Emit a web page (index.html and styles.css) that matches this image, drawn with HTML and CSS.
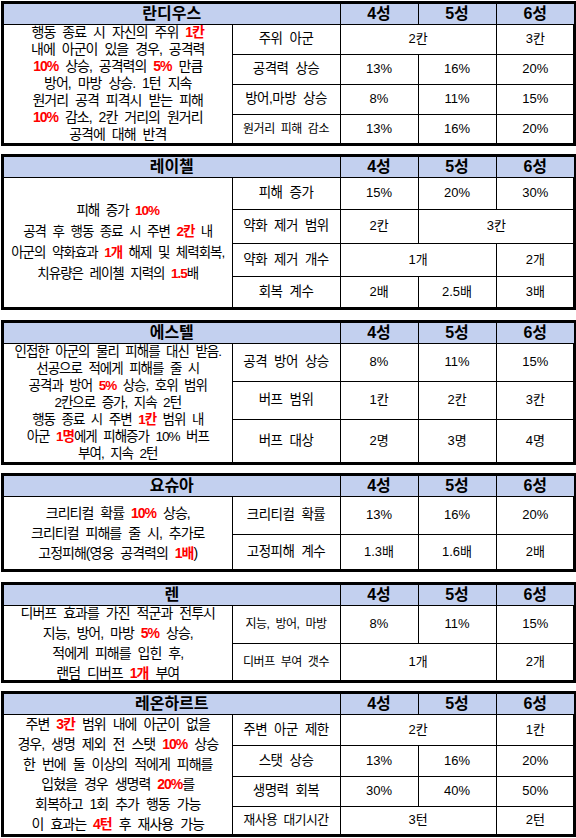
FILE: index.html
```html
<!DOCTYPE html>
<html lang="ko">
<head>
<meta charset="utf-8">
<title>영웅 스킬</title>
<link rel="stylesheet" href="styles.css">
</head>
<body>
<main class="page">

<section class="blk">
<table class="t">
<colgroup><col class="c1"><col class="c2"><col class="c3"><col class="c3"><col class="c3"></colgroup>
<tr class="h20"><th colspan="2">란디우스</th><th>4성</th><th>5성</th><th>6성</th></tr>
<tr class="h30"><td class="desc" rowspan="4"><div class="dt"><p class="lh17">행동 종료 시 자신의 주위 <b>1칸</b><br>내에 아군이 있을 경우, 공격력<br><b>10%</b> 상승, 공격력의 <b>5%</b> 만큼<br>방어, 마방 상승. 1턴 지속<br>원거리 공격 피격시 받는 피해<br><b>10%</b> 감소, 2칸 거리의 원거리<br>공격에 대해 반격</p></div></td><td class="lbl">주위 아군</td><td colspan="2">2칸</td><td>3칸</td></tr>
<tr class="h30"><td class="lbl">공격력 상승</td><td>13%</td><td>16%</td><td>20%</td></tr>
<tr class="h30"><td class="lbl">방어,마방 상승</td><td>8%</td><td>11%</td><td>15%</td></tr>
<tr class="h29"><td class="lbl sm">원거리 피해 감소</td><td>13%</td><td>16%</td><td>20%</td></tr>
</table>
</section>

<section class="blk g8">
<table class="t">
<colgroup><col class="c1"><col class="c2"><col class="c3"><col class="c3"><col class="c3"></colgroup>
<tr class="h20"><th colspan="2">레이첼</th><th>4성</th><th>5성</th><th>6성</th></tr>
<tr class="h32"><td class="desc" rowspan="4"><div class="dt"><p class="lh21 mid">피해 증가 <b>10%</b><br>공격 후 행동 종료 시 주변 <b>2칸</b> 내<br>아군의 약화효과 <b>1개</b> 해제 및 체력회복,<br>치유량은 레이첼 지력의 <b>1.5</b>배</p></div></td><td class="lbl">피해 증가</td><td>15%</td><td>20%</td><td>30%</td></tr>
<tr class="h34"><td class="lbl">약화 제거 범위</td><td>2칸</td><td colspan="2">3칸</td></tr>
<tr class="h33"><td class="lbl">약화 제거 개수</td><td colspan="2">1개</td><td>2개</td></tr>
<tr class="h31"><td class="lbl">회복 계수</td><td>2배</td><td>2.5배</td><td>3배</td></tr>
</table>
</section>

<section class="blk g10">
<table class="t">
<colgroup><col class="c1"><col class="c2"><col class="c3"><col class="c3"><col class="c3"></colgroup>
<tr class="h20"><th colspan="2">에스텔</th><th>4성</th><th>5성</th><th>6성</th></tr>
<tr class="h38"><td class="desc" rowspan="3"><div class="dt"><p class="lh17 mid">인접한 아군의 물리 피해를 대신 받음.<br>선공으로 적에게 피해를 줄 시<br>공격과 방어 <b>5%</b> 상승, 호위 범위<br>2칸으로 증가, 지속 2턴<br>행동 종료 시 주변 <b>1칸</b> 범위 내<br>아군 <b>1명</b>에게 피해증가 10% 버프<br>부여, 지속 2턴</p></div></td><td class="lbl">공격 방어 상승</td><td>8%</td><td>11%</td><td>15%</td></tr>
<tr class="h38"><td class="lbl">버프 범위</td><td>1칸</td><td>2칸</td><td>3칸</td></tr>
<tr class="h43"><td class="lbl">버프 대상</td><td>2명</td><td>3명</td><td>4명</td></tr>
</table>
</section>

<section class="blk g8">
<table class="t">
<colgroup><col class="c1"><col class="c2"><col class="c3"><col class="c3"><col class="c3"></colgroup>
<tr class="h20"><th colspan="2">요슈아</th><th>4성</th><th>5성</th><th>6성</th></tr>
<tr class="h38"><td class="desc" rowspan="2"><div class="dt"><p class="lh20">크리티컬 확률 <b>10%</b> 상승,<br>크리티컬 피해를 줄 시, 추가로<br>고정피해(영웅 공격력의 <b>1배</b>)</p></div></td><td class="lbl">크리티컬 확률</td><td>13%</td><td>16%</td><td>20%</td></tr>
<tr class="h35"><td class="lbl">고정피해 계수</td><td>1.3배</td><td>1.6배</td><td>2배</td></tr>
</table>
</section>

<section class="blk g10">
<table class="t">
<colgroup><col class="c1"><col class="c2"><col class="c3"><col class="c3"><col class="c3"></colgroup>
<tr class="h20"><th colspan="2">렌</th><th>4성</th><th>5성</th><th>6성</th></tr>
<tr class="h38"><td class="desc" rowspan="2"><div class="dt"><p class="lh20">디버프 효과를 가진 적군과 전투시<br>지능, 방어, 마방 <b>5%</b> 상승,<br>적에게 피해를 입힌 후,<br>랜덤 디버프 <b>1개</b> 부여</p></div></td><td class="lbl sm">지능, 방어, 마방</td><td>8%</td><td>11%</td><td>15%</td></tr>
<tr class="h37"><td class="lbl sm">디버프 부여 갯수</td><td colspan="2">1개</td><td>2개</td></tr>
</table>
</section>

<section class="blk g8">
<table class="t">
<colgroup><col class="c1"><col class="c2"><col class="c3"><col class="c3"><col class="c3"></colgroup>
<tr class="h20"><th colspan="2">레온하르트</th><th>4성</th><th>5성</th><th>6성</th></tr>
<tr class="h31"><td class="desc" rowspan="4"><div class="dt"><p class="lh20">주변 <b>3칸</b> 범위 내에 아군이 없을<br>경우, 생명 제외 전 스탯 <b>10%</b> 상승<br>한 번에 둘 이상의 적에게 피해를<br>입혔을 경우 생명력 <b>20%</b>를<br>회복하고 1회 추가 행동 가능<br>이 효과는 <b>4턴</b> 후 재사용 가능</p></div></td><td class="lbl">주변 아군 제한</td><td colspan="2">2칸</td><td>1칸</td></tr>
<tr class="h31"><td class="lbl">스탯 상승</td><td>13%</td><td>16%</td><td>20%</td></tr>
<tr class="h30"><td class="lbl">생명력 회복</td><td>30%</td><td>40%</td><td>50%</td></tr>
<tr class="h28"><td class="lbl md">재사용 대기시간</td><td colspan="2">3턴</td><td>2턴</td></tr>
</table>
</section>

</main>
</body>
</html>
```

FILE: styles.css
```css
html, body {
  margin: 0;
  padding: 0;
  background: #ffffff;
}

.page {
  padding: 1px 0 0 1px;
  font-family: "Liberation Sans", "Noto Sans CJK KR", sans-serif;
  color: #000000;
}

.blk {
  width: 575px;
  box-sizing: border-box;
  border: 3px solid #000000;
}

.g8 { margin-top: 8px; }
.g10 { margin-top: 10px; }

.t {
  width: 100%;
  table-layout: fixed;
  border-collapse: collapse;
  border-style: hidden;
}

.c1 { width: 228px; }
.c2 { width: 108px; }
.c3 { width: 78px; }

.t th,
.t td {
  border: 1px solid #000000;
  padding: 0;
  text-align: center;
  vertical-align: middle;
  white-space: nowrap;
}

.t th {
  background: #c3d0ef;
  font-size: 16px;
  font-weight: 700;
  line-height: 18px;
}

.t td {
  font-size: 13px;
  line-height: 16px;
}

.t td.lbl {
  font-size: 13.5px;
  letter-spacing: -0.5px;
  word-spacing: 3.7px;
}

.t td.lbl.sm {
  font-size: 12px;
  letter-spacing: -0.5px;
  word-spacing: 3.2px;
}

.t td.lbl.md {
  font-size: 12.8px;
  letter-spacing: -0.5px;
  word-spacing: 3px;
}

/* description cell: text is centred on the cell and may run over it,
   as a spreadsheet cell does, without stretching the rows */
.dt {
  height: 0;
  display: flex;
  flex-direction: column;
  justify-content: center;
  align-items: center;
}

.dt p {
  margin: 0;
  font-size: 14px;
  letter-spacing: -1px;
  word-spacing: 4.1px;
  text-align: center;
  white-space: nowrap;
}

.dt p.mid {
  font-size: 13.5px;
  word-spacing: 3.75px;
}

.dt b {
  color: #ff0000;
  font-weight: 700;
}

.lh17 { line-height: 17px; }
.lh20 { line-height: 20px; }
.lh21 { line-height: 21px; }

.h20 { height: 20px; }
.h28 { height: 28px; }
.h29 { height: 29px; }
.h30 { height: 30px; }
.h31 { height: 31px; }
.h32 { height: 32px; }
.h33 { height: 33px; }
.h34 { height: 34px; }
.h35 { height: 35px; }
.h37 { height: 37px; }
.h38 { height: 38px; }
.h43 { height: 43px; }
```
